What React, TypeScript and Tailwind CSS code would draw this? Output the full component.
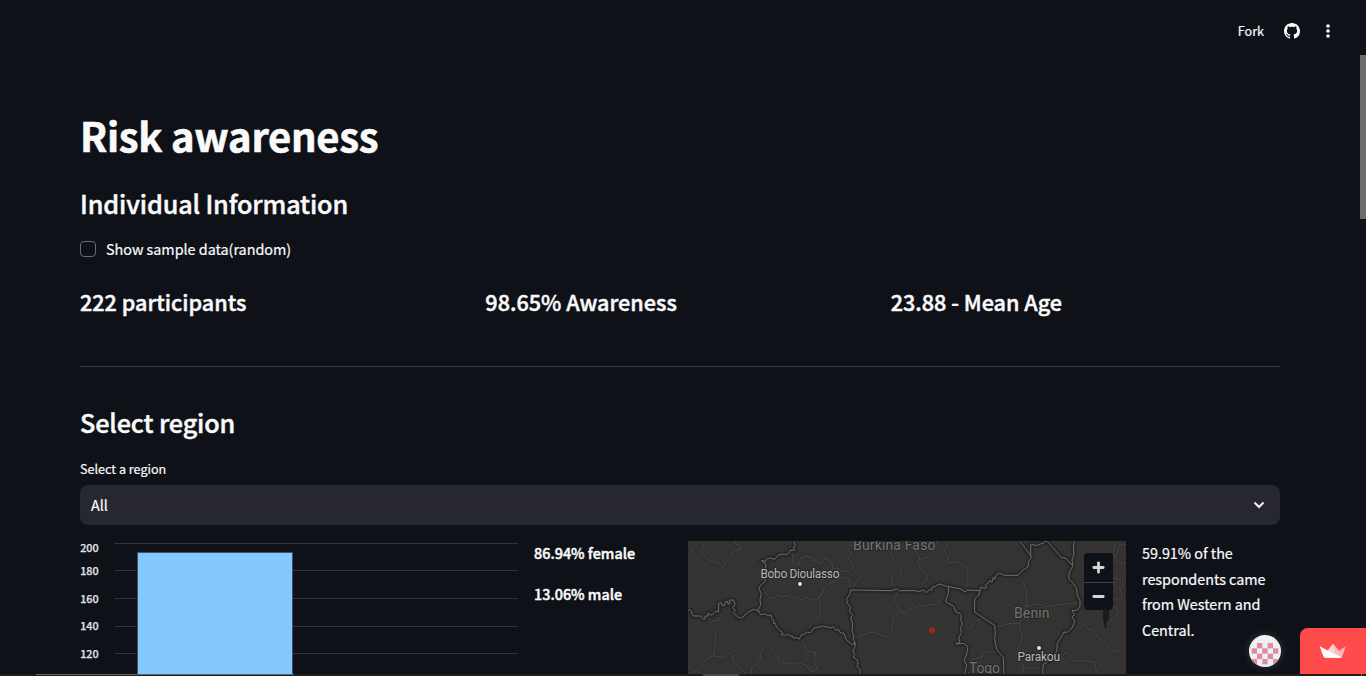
import type { ReactNode } from 'react';

const ticks = [
  { label: '200', y: 2, ty: 7 },
  { label: '180', y: 29, ty: 30 },
  { label: '160', y: 57, ty: 58 },
  { label: '140', y: 85, ty: 85 },
  { label: '120', y: 112, ty: 113 },
];

function GithubMark() {
  return (
    <svg viewBox="0 0 16 16" className="size-4" fill="#fafafa">
      <path d="M8 0C3.58 0 0 3.58 0 8c0 3.54 2.29 6.53 5.47 7.59.4.07.55-.17.55-.38 0-.19-.01-.82-.01-1.49-2.01.37-2.53-.49-2.69-.94-.09-.23-.48-.94-.82-1.13-.28-.15-.68-.52-.01-.53.63-.01 1.08.58 1.23.82.72 1.21 1.87.87 2.33.66.07-.52.28-.87.51-1.07-1.78-.2-3.64-.89-3.64-3.95 0-.87.31-1.59.82-2.15-.08-.2-.36-1.02.08-2.12 0 0 .67-.21 2.2.82.64-.18 1.32-.27 2-.27s1.36.09 2 .27c1.53-1.04 2.2-.82 2.2-.82.44 1.1.16 1.92.08 2.12.51.56.82 1.27.82 2.15 0 3.07-1.87 3.75-3.65 3.95.29.25.54.73.54 1.48 0 1.07-.01 1.93-.01 2.2 0 .21.15.46.55.38A8.01 8.01 0 0 0 16 8c0-4.42-3.58-8-8-8z" />
    </svg>
  );
}

function Header() {
  return (
    <header className="flex h-[61px] shrink-0 items-center justify-end pr-[30px] pt-px">
      <span className="mr-5 text-[12.6px] leading-5 [-webkit-text-stroke:0.2px_#fafafa]">Fork</span>
      <GithubMark />
      <svg viewBox="0 0 16 16" className="ml-5 size-4" fill="#fafafa">
        <circle cx="8" cy="3" r="1.8" />
        <circle cx="8" cy="8" r="1.8" />
        <circle cx="8" cy="13" r="1.8" />
      </svg>
    </header>
  );
}

function Semibold({ className, children }: { className: string; children: ReactNode }) {
  return (
    <div className={`whitespace-nowrap font-medium [-webkit-text-stroke:0.45px_#fafafa] ${className}`}>{children}</div>
  );
}

function Chart() {
  return (
    <svg viewBox="0 0 438 133" className="h-[133px] w-[438px]">
      {ticks.map((t) => (
        <g key={t.label}>
          <rect x="34.5" y={t.y} width="403.5" height="1" fill="#31333f" />
          <text x="18.6" y={t.ty + 4} textAnchor="end" fontSize="10.8" fontWeight="500" fill="#e0e1e6" stroke="#e0e1e6" strokeWidth="0.25">
            {t.label}
          </text>
        </g>
      ))}
      <rect x="57.5" y="11.5" width="155" height="140" fill="#83c9ff" stroke="#3b5368" strokeWidth="1" />
    </svg>
  );
}

const westRegions = [
  'M6 55 L14 48 L22 32 L40 18 L44 14 M46 14 L52 28 L47 45 L55 61 L68 72 L88 78 L100 84 L112 95 L124 68 L136 62 L140 50 L152 44 L160 40 L168 38 L164 28 L150 24 L147 14',
  'M333 14 L328 30 L320 48 L320 74 L328 88 L340 84 L344 66 L358 60 L380 66 L396 80 L404 85 L412 70 L426 68 L438 84 L440 98 L456 96 L464 106 L480 104 L496 108',
  'M492 14 L496 30 L484 42 L496 52 L488 66 L498 84 L500 100 L512 112 L526 122 L514 132 L505 150 L494 158 L490 130 L470 122 L456 132 L430 142 L414 156 L408 176 L394 186',
  'M222 158 L236 168 L246 182 L262 187 L276 177 L290 183 L306 178 L318 188 L332 180 L346 193 L360 184 L374 190 L392 193 L408 174 M398 190 L404 210 L402 230 L394 248 L376 262 L372 268 L384 276',
  'M105 236 L100 252 L78 256 L68 268 L82 278 L90 300 L86 340 L82 360 L66 366 L52 378 L42 396 L30 404 L16 410 M82 358 L96 362 L116 364 L124 352 L136 352 L142 360 L138 372 L156 386 L176 410',
  'M196 414 L198 394 L214 384 L224 366 L226 342 L240 330 L252 334 L260 348 L274 356 L278 376 L300 382 L330 380 L360 386 L376 408 L394 398 L384 376 L390 352 L358 344 L354 322 L340 306',
  'M610 14 L614 30 L612 52 L620 68 L650 102 L616 126 L620 146 L636 166 L624 192 L640 222 L626 236 L620 262 L614 292 L602 304 L588 300 L566 288 L540 292 L520 304 L506 300 M640 222 L660 230 L668 218 L690 212',
];

const eastRegions = [
  'M0 228 L20 236 L32 220 L56 210 L80 208 L110 204 L124 196 L138 198 M130 14 L142 28 L132 42 L144 64 L146 80 L172 78 L188 90 L198 92 L204 120 L196 158',
  'M0 95 L8 106 L0 118 M38 14 L44 38 L58 64 L54 78 L60 100 L74 108 L84 130 L68 140 L70 160 M58 70 L80 64 L96 54 L104 40 L112 14',
  'M355 118 L370 140 L380 166 L380 212 L410 204 L440 212 L480 206 L512 202 L540 198 M376 210 L374 228 L358 262 L362 284 L368 300 L360 324 L352 340 L358 370 L370 388 L368 414',
  'M284 268 L310 270 L330 262 L358 262 M184 264 L204 278 L214 280 L222 256 L240 250 L254 254 M202 378 L222 368 L246 364 L248 350 L280 346 L292 342 M370 396 L428 396 M428 384 L450 380 L460 366 L476 358 L484 370 L496 348 L508 358 L518 374 L548 376 L558 374 L584 378 L586 396 L594 414',
  'M526 252 L540 262 L552 266 L568 280 L582 284 L594 304 L616 320 L632 340 L650 346 L664 344 L678 356 M640 14 L646 30 L640 50 L650 76 L670 82 L678 84 M678 26 L656 28 L650 60 M640 126 L664 132 L672 148 L656 156 L668 172 L664 186 L640 190 L634 214 L650 216 L656 230 L646 246 L630 254 L620 242 M516 168 L552 168',
];

const westBorders = [
  'M330 14 L324 20 L328 30 L322 36 L326 42 L312 44 L308 52 L302 56 L288 54 L276 58 L270 66 L264 70 L254 66 L244 68 L238 76 L226 74 L240 84 L238 98 L244 108 L240 120 L236 138 L226 146 L218 156 L226 172 L222 190 L224 208 L216 222 L224 236 L238 234 L246 240 L254 236 L258 248 L264 254 L262 262 L268 262 L272 274 L280 282 L290 290 L286 296 L298 298 L306 294 L312 302 L318 298 L322 306 L330 304 L340 309 L346 296 L356 294 L362 288 L374 290 L384 276 L394 274 L412 270 L434 276 L442 272 L450 284 L456 278 L462 290 L474 292 L480 310 L498 326 L508 320 L506 334 L500 344 L506 356 L502 364 L514 372 L516 384 L512 390 L522 400 L522 412',
  'M6 222 L14 222 L18 232 L22 240 L44 240 L50 248 L56 250 L58 240 L66 240 L66 232 L78 238 L88 226 L98 228 L98 202 L106 200 L108 208 L116 208 L118 198 L124 196 L126 204 L132 202 L130 192 L142 192 L148 206 L140 214 L148 224 L142 230 L152 240 L160 246 L170 244 L186 228 L204 220 L220 226',
  'M690 164 L640 164 L632 158 L618 164 L494 162 L492 174 L482 188 L484 202 L494 214 L490 226 L500 236 L494 246 L500 262 L498 286 L504 300 L502 310 L508 326',
];

const eastBorders = [
  'M0 164 L50 164 L54 168 L70 162 L80 170 L88 160 L94 164 L98 152 L106 152 L112 146 L120 144 L136 150 L180 158 L196 168 L200 162 L240 164 L244 152 L252 158 L260 154 L256 146 L264 142 L268 134 L276 138 L280 124 L284 130 L288 118 L296 112 L304 114 L314 118 L354 118 L364 106 L384 92 L386 76 L396 62 L388 54 L360 16 M392 60 L392 26 L412 28 L432 20 L440 14 L484 64 L500 68 L512 84 L520 88 L508 108 L506 128 L520 142 L530 158 L532 178 L540 194 L540 212 L532 222 L516 224 L524 236 L516 242 L524 254 L518 274 L510 280 L500 290 L492 288 L486 300 L472 322 L470 346 L460 362 L440 380 L430 384 L428 414 M524 14 L520 28 L522 56 L516 72 L518 86',
  'M146 152 L144 176 L136 196 L160 210 L168 228 L180 232 L184 238 L182 252 L188 264 L182 274 L184 292 L176 306 L180 318 L168 324 L190 322 L204 332 L200 356 L192 372 L200 388 L194 412',
  'M240 164 L236 178 L224 188 L224 228 L284 268 L286 290 L284 310 L290 340 L310 364 L312 414',
];

function Paths({ d, color, width }: { d: string[]; color: string; width: number }) {
  return (
    <>
      {d.map((p) => (
        <path key={p} d={p} fill="none" stroke={color} strokeWidth={width} strokeLinejoin="round" />
      ))}
    </>
  );
}

function MapLines({ regions, borders, place }: { regions: string[]; borders: string[]; place: string }) {
  return (
    <g transform={place}>
      <Paths d={regions} color="#302f2e" width={8} />
      <Paths d={regions} color="#4b4a49" width={2.6} />
      <Paths d={borders} color="#2c2b2b" width={18} />
      <Paths d={borders} color="#272626" width={10} />
      <Paths d={borders} color="#6d6c6b" width={3} />
    </g>
  );
}

function RegionMap() {
  return (
    <div className="relative h-[133px] w-[438px] bg-[#343332]">
      <svg viewBox="0 0 438 133" className="h-[133px] w-[438px] font-[Roboto,sans-serif]">
        <MapLines regions={westRegions} borders={westBorders} place="translate(-2 -5) scale(.33333)" />
        <MapLines regions={eastRegions} borders={eastBorders} place="translate(212 -5) scale(.33333)" />
        <path d="M415 68 L421 68 L421 78 L418 82 L419 87 L417 87 L415 78 Z" fill="#1b1b1b" />
        <g stroke="#282727" strokeWidth="2" paintOrder="stroke">
          <g fill="#757473" fontSize="14">
            <text x="165" y="9" textLength="82.5">Burkina Faso</text>
            <text x="326" y="77" textLength="35.5">Benin</text>
            <text x="281" y="132" textLength="31">Togo</text>
          </g>
          <g fill="#b9b8b7" fontSize="12">
            <text x="72.5" y="37" textLength="79">Bobo Dioulasso</text>
            <text x="329.5" y="120" textLength="42.5">Parakou</text>
          </g>
          <circle cx="112" cy="43" r="2" fill="#e4e4e4" />
          <circle cx="351" cy="107" r="2" fill="#e4e4e4" />
        </g>
        <circle cx="244" cy="89.3" r="3.1" fill="#962a1b" />
      </svg>
      <div className="absolute left-[396px] top-3 h-[57px] w-[29px] overflow-hidden rounded bg-[#0e1117]">
        <svg viewBox="0 0 29 57" className="h-[57px] w-[29px]">
          <rect y="29" width="29" height="1" fill="#3f4146" />
          <path d="M9.8 14.5h9.4M14.5 9.8v9.4M9.8 43.5h9.4" stroke="#d4d5d6" strokeWidth="2.8" strokeLinecap="round" />
        </svg>
      </div>
    </div>
  );
}

const avatarCells = [
  [8, 8], [18.67, 8],
  [2.67, 13.33], [13.33, 13.33], [24, 13.33],
  [8, 18.67], [18.67, 18.67],
  [2.67, 24], [13.33, 24], [24, 24],
];

function HostBadges() {
  return (
    <div className="absolute bottom-[2px] right-0 flex items-end">
      <svg
        viewBox="0 0 32 32"
        className="mb-[7px] mr-[19px] size-8 rounded-full bg-[#f0f0f0] shadow-[0_0_8px_rgba(255,255,255,0.16)]"
      >
        {avatarCells.map(([x, y]) => (
          <rect key={`${x}-${y}`} x={x} y={y} width="5.33" height="5.33" fill="#e08ba1" />
        ))}
      </svg>
      <div className="h-[46px] w-[66px] rounded-tl-lg bg-[#ff4b4b]">
        <svg viewBox="180 12 198 138" className="h-[46px] w-[66px]">
          <path d="M279 59 L296 80 L305 101 L255 101 L262 80 Z" fill="#ffd3d8" />
          <path d="M318 66 L305 101 L292 84 Z" fill="#ffb3b7" />
          <path d="M279 59 L296 80 L303 97 L284 88 Z" fill="#ffbcc2" />
          <path d="M239 67 L305 101 L255 101 Q251 101 250 97 Z" fill="#ffffff" />
        </svg>
      </div>
    </div>
  );
}

export default function App() {
  return (
    <div className="relative flex h-[676px] w-[1366px] flex-col overflow-hidden bg-[#0e1117] font-['Noto_Sans_CJK_SC',sans-serif] text-[14.4px] text-[#fafafa]">
      <Header />
      <main className="ml-20 flex min-h-0 w-[1200px] flex-1 flex-col overflow-hidden">
        <h1 className="mt-12 h-[52px] text-[40px] font-bold leading-[52px] tracking-[-0.3px] [-webkit-text-stroke:0.6px_#fafafa]">
          Risk awareness
        </h1>
        <Semibold className="mt-[25px] h-[34px] text-[25.2px] leading-[34px] tracking-[-0.12px]">Individual Information</Semibold>
        <label className="mt-[17px] flex h-6 items-center gap-[10px]">
          <span className="size-4 rounded border border-[#6b6c73]" />
          <span className="leading-6 tracking-[-0.03px] [-webkit-text-stroke:0.2px_#fafafa]">Show sample data(random)</span>
        </label>
        <div className="mt-[26px] grid h-[30px] grid-cols-3 gap-4">
          <Semibold className="text-[21.6px] leading-[30px]">222 participants</Semibold>
          <Semibold className="text-[21.6px] leading-[30px]">98.65% Awareness</Semibold>
          <Semibold className="text-[21.6px] leading-[30px]">23.88 - Mean Age</Semibold>
        </div>
        <hr className="mt-[49px] border-t border-[#3b3d45]" />
        <Semibold className="mt-[38px] h-[34px] text-[25.2px] leading-[34px] tracking-[-0.12px]">Select region</Semibold>
        <div className="mt-5 h-5 text-[12.6px] leading-5 [-webkit-text-stroke:0.2px_#fafafa]">Select a region</div>
        <div className="mt-[6px] flex h-10 shrink-0 items-center justify-between rounded-lg bg-[#262730] pl-[11px] pr-[15px]">
          <span className="leading-10 [-webkit-text-stroke:0.2px_#fafafa]">All</span>
          <svg viewBox="0 0 12 8" className="h-2 w-3" fill="none" stroke="#fafafa" strokeWidth="2">
            <path d="M1.5 1.5 L6 6 L10.5 1.5" />
          </svg>
        </div>
        <div className="mt-[15px] flex shrink-0 gap-4">
          <div className="pt-px">
            <Chart />
          </div>
          <div className="flex w-[138px] flex-col gap-[15px]">
            <Semibold className="leading-[26px]">86.94% female</Semibold>
            <Semibold className="leading-[26px]">13.06% male</Semibold>
          </div>
          <div className="pt-px">
            <RegionMap />
          </div>
          <p className="w-[138px] leading-[25.6px] tracking-[-0.03px] [-webkit-text-stroke:0.2px_#fafafa]">
            59.91% of the respondents came from Western and Central.
          </p>
        </div>
      </main>
      <div className="flex h-[2px] shrink-0 bg-[#231c1d]">
        <div className="ml-9 h-px w-[258px] bg-[#6a6666]" />
        <div className="ml-[409px] h-[2px] w-9 bg-[#4b4949]" />
        <div className="ml-[622px] h-[2px] w-px bg-[#6a6666]" />
      </div>
      <div className="absolute right-0 top-[55px] h-[164px] w-[6px] bg-[#6b6b6e]" />
      <HostBadges />
    </div>
  );
}
